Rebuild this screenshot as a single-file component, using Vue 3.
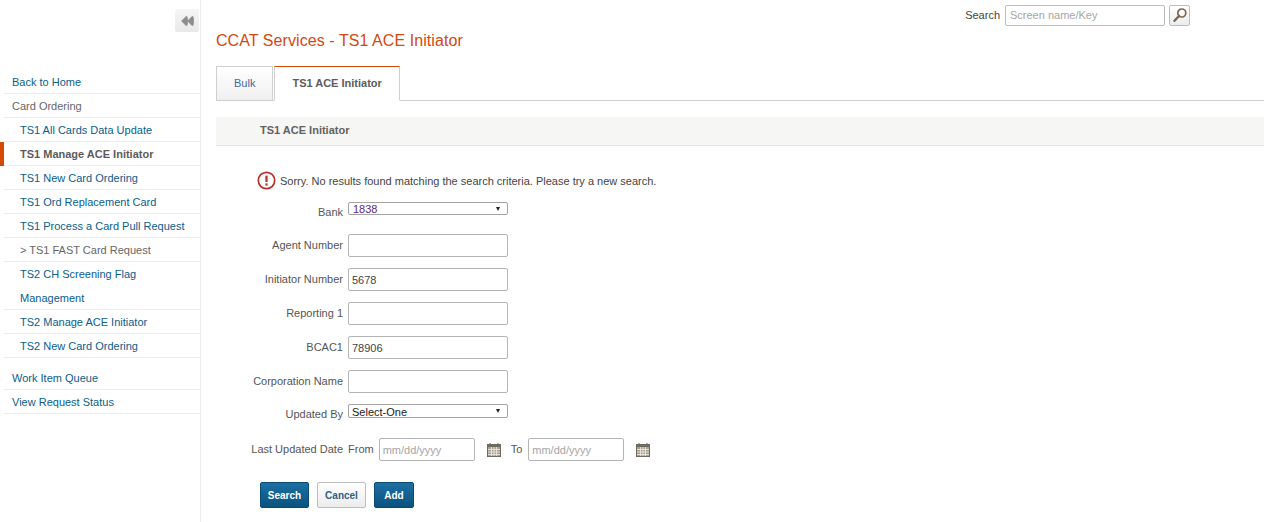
<template>
  <div class="page">
    <aside class="sidebar">
      <div class="collapse-row">
        <button class="collapse" type="button" aria-label="Collapse">
          <svg width="14" height="12" viewBox="0 0 14 12"><path d="M6.5 1 L1.5 6 L6.5 11 L7.5 9 L7.5 3 Z M12.5 1 L7.5 6 L12.5 11 L13.5 9 L13.5 3 Z" fill="#8c8c8c" stroke="#8c8c8c" stroke-width="0.6" stroke-linejoin="round" /></svg>
        </button>
      </div>
      <nav class="nav">
        <a
          v-for="item in navItems"
          :key="item.label"
          class="nav-item"
          :class="[item.kind, { active: item.active }]"
        >{{ item.label }}</a>
      </nav>
      <nav class="nav nav-second">
        <a class="nav-item" v-for="item in secondItems" :key="item">{{ item }}</a>
      </nav>
    </aside>

    <main class="main">
      <div class="top-search">
        <label>Search</label>
        <input type="text" placeholder="Screen name/Key">
        <button class="search-icon" type="button" aria-label="Search">
          <svg width="16" height="16" viewBox="0 0 16 16">
            <circle cx="9.8" cy="6" r="4" fill="#fbfaf8" stroke="#7a6650" stroke-width="1.7" />
            <path d="M7 9 L2.5 13.8" stroke="#7a6650" stroke-width="2.4" stroke-linecap="round" />
          </svg>
        </button>
      </div>

      <h1 class="title">CCAT Services - TS1 ACE Initiator</h1>

      <div class="tabs">
        <a class="tab">Bulk</a>
        <a class="tab tab-active">TS1 ACE Initiator</a>
      </div>

      <div class="section-bar">TS1 ACE Initiator</div>

      <div class="message">
        <svg width="19" height="19" viewBox="0 0 19 19">
          <circle cx="9.5" cy="9.5" r="8.2" fill="#fff" stroke="#b5302a" stroke-width="1.7" />
          <path d="M9.5 4.6 V11" stroke="#b5302a" stroke-width="2.2" />
          <rect x="8.4" y="12.4" width="2.2" height="2.2" fill="#b5302a" />
        </svg>
        <span>Sorry. No results found matching the search criteria. Please try a new search.</span>
      </div>

      <form class="form" @submit.prevent>
        <div class="row row-bank">
          <label>Bank</label>
          <div class="fake-select"><span class="purple">1838</span><i></i></div>
        </div>
        <div class="row row-input" v-for="f in fields" :key="f.label">
          <label>{{ f.label }}</label>
          <input type="text" :value="f.value">
        </div>
        <div class="row row-updated">
          <label>Updated By</label>
          <div class="fake-select tall"><span class="dark">Select-One</span><i></i></div>
        </div>
        <div class="row row-date">
          <label>Last Updated Date</label>
          <span class="date-word">From</span>
          <input class="date" type="text" placeholder="mm/dd/yyyy">
          <svg class="cal" width="14" height="14" viewBox="0 0 14 14"><use href="#cal" /></svg>
          <span class="date-word to">To</span>
          <input class="date" type="text" placeholder="mm/dd/yyyy">
          <svg class="cal" width="14" height="14" viewBox="0 0 14 14"><use href="#cal" /></svg>
        </div>
        <div class="buttons">
          <button class="btn primary" type="button">Search</button>
          <button class="btn plain" type="button">Cancel</button>
          <button class="btn primary" type="button">Add</button>
        </div>
      </form>

      <svg width="0" height="0" class="defs">
        <defs>
          <g id="cal">
            <rect x="0.5" y="1.5" width="13" height="12" fill="#a8a090" stroke="#6f6a60" />
            <rect x="0.5" y="1.5" width="13" height="2.5" fill="#6f6a60" />
            <path d="M3 0 V3 M11 0 V3" stroke="#6f6a60" />
            <path d="M4.5 4 V13 M7 4 V13 M9.5 4 V13 M1 6.5 H13 M1 9 H13 M1 11.5 H13" stroke="#f0eeea" stroke-width="0.8" />
          </g>
        </defs>
      </svg>
    </main>
  </div>
</template>

<script setup>
const navItems = [
  { label: 'Back to Home', kind: 'top' },
  { label: 'Card Ordering', kind: 'top grey' },
  { label: 'TS1 All Cards Data Update', kind: 'sub' },
  { label: 'TS1 Manage ACE Initiator', kind: 'sub', active: true },
  { label: 'TS1 New Card Ordering', kind: 'sub' },
  { label: 'TS1 Ord Replacement Card', kind: 'sub' },
  { label: 'TS1 Process a Card Pull Request', kind: 'sub' },
  { label: '> TS1 FAST Card Request', kind: 'sub grey' },
  { label: 'TS2 CH Screening Flag Management', kind: 'sub wrap' },
  { label: 'TS2 Manage ACE Initiator', kind: 'sub' },
  { label: 'TS2 New Card Ordering', kind: 'sub' }
]

const secondItems = ['Work Item Queue', 'View Request Status']

const fields = [
  { label: 'Agent Number', value: '' },
  { label: 'Initiator Number', value: '5678' },
  { label: 'Reporting 1', value: '' },
  { label: 'BCAC1', value: '78906' },
  { label: 'Corporation Name', value: '' }
]
</script>

<style>
html, body {
  background: #fff;
  overflow: hidden;
}
</style>

<style scoped>
.page {
  display: flex;
  height: 522px;
  font-family: "Liberation Sans", Arial, sans-serif;
  font-size: 11px;
  color: #555;
}

.sidebar {
  width: 200px;
  flex: none;
  box-sizing: content-box;
  border-right: 1px solid #ededed;
}

.collapse-row {
  height: 70px;
  display: flex;
  justify-content: flex-end;
  align-items: flex-start;
  padding-top: 9px;
  box-sizing: border-box;
}

.collapse {
  width: 24px;
  height: 23px;
  margin-right: 1px;
  padding: 0;
  border: none;
  border-radius: 2px;
  background: linear-gradient(#f5f5f5, #e9e9e9);
  display: flex;
  align-items: center;
  justify-content: center;
}

.nav {
  display: flex;
  flex-direction: column;
  padding-left: 4px;
}

.nav-second {
  margin-top: 8px;
}

.nav-item {
  display: block;
  height: 24px;
  line-height: 24px;
  padding-left: 8px;
  padding-right: 8px;
  box-sizing: border-box;
  border-bottom: 1px solid #ececec;
  color: #0a5d8c;
}

.nav-item.grey {
  color: #666;
}

.nav-item.sub {
  padding-left: 16px;
}

.nav-item.wrap {
  height: 48px;
  padding-right: 40px;
}

.nav-item.active {
  color: #5c5c5c;
  font-weight: bold;
  position: relative;
}

.nav-item.active::before {
  content: "";
  position: absolute;
  left: -4px;
  top: 0;
  bottom: -1px;
  width: 4px;
  background: #d64a05;
}

.main {
  flex: 1;
  min-width: 0;
  padding: 0 13px 0 15px;
}

.top-search {
  display: flex;
  justify-content: flex-end;
  align-items: center;
  height: 30px;
  padding-right: 74px;
  gap: 5px;
  color: #444;
}

.top-search input {
  width: 160px;
  height: 21px;
  box-sizing: border-box;
  border: 1px solid #bdbdbd;
  border-radius: 2px;
  padding: 0 4px;
  font: inherit;
}

.top-search input::placeholder,
.date::placeholder {
  color: #a5a5a5;
  opacity: 1;
}

.search-icon {
  width: 21px;
  height: 21px;
  margin-left: -1px;
  padding: 0;
  border: 1px solid #bdbdbd;
  border-radius: 2px;
  background: linear-gradient(#fff, #ececec);
  display: flex;
  align-items: center;
  justify-content: center;
}

.title {
  margin: 0;
  font-size: 16px;
  font-weight: normal;
  line-height: 22px;
  letter-spacing: 0.07px;
  color: #d6470f;
}

.tabs {
  display: flex;
  align-items: flex-start;
  gap: 1px;
  height: 34px;
  margin-top: 14px;
  border-bottom: 1px solid #cfcfcf;
}

.tab {
  box-sizing: border-box;
  height: 35px;
  line-height: 33px;
  padding: 0 17px;
  color: #3f6a9a;
  background: linear-gradient(#fff, #f0f0f0);
  border: 1px solid #cfcfcf;
}

.tab-active {
  color: #5c5c5c;
  font-weight: bold;
  background: #fff;
  border-top: 1px solid #d64a05;
  border-bottom-color: #fff;
}

.section-bar {
  margin-top: 16px;
  height: 29px;
  line-height: 27px;
  box-sizing: border-box;
  padding-left: 44px;
  background: #f6f6f4;
  border-bottom: 1px solid #e3e3e3;
  font-weight: bold;
  color: #626262;
}

.message {
  display: flex;
  align-items: center;
  gap: 4px;
  height: 19px;
  margin: 25px 0 0 41px;
  color: #444;
}

.form {
  display: flex;
  flex-direction: column;
}

.row {
  display: flex;
  align-items: center;
}

.row > label {
  width: 127px;
  margin-right: 5px;
  text-align: right;
  color: #555;
  flex: none;
}

.row-bank {
  margin-top: 12px;
  height: 25px;
  align-items: flex-start;
}

.row-bank label,
.row-updated label {
  line-height: 13px;
  padding-top: 4px;
}

.fake-select {
  width: 160px;
  height: 13px;
  box-sizing: border-box;
  border: 1px solid #a3a3a3;
  border-radius: 2px;
  display: flex;
  align-items: center;
  justify-content: space-between;
  padding: 0 7px 0 3px;
  background: #fff;
}

.fake-select.tall {
  height: 14px;
}

.fake-select i {
  width: 0;
  height: 0;
  border-left: 2.5px solid transparent;
  border-right: 2.5px solid transparent;
  border-top: 4px solid #222;
}

.purple {
  color: #5a2a78;
  margin-left: 1px;
}

.dark {
  color: #222;
  padding-top: 1px;
}

.row-input {
  height: 23px;
  margin-bottom: 11px;
}

.row-bank + .row-input {
  margin-top: 7px;
}

.row-input label {
  padding-bottom: 1px;
}

.row-input input {
  width: 160px;
  height: 23px;
  box-sizing: border-box;
  border: 1px solid #b5b5b5;
  border-radius: 2px;
  padding: 0 3px;
  font: inherit;
  color: #444;
}

.row-updated {
  height: 14px;
  align-items: flex-start;
}

.row-date {
  margin-top: 20px;
  height: 23px;
}

.row-date > label,
.date-word {
  padding-bottom: 2px;
}

.date-word {
  color: #555;
  margin-right: 5px;
}

.date-word.to {
  margin-right: 6px;
}

.date {
  width: 96px;
  height: 23px;
  box-sizing: border-box;
  border: 1px solid #b5b5b5;
  border-radius: 2px;
  padding: 0 3px;
  font: inherit;
}

.cal {
  margin: 0 10px 0 12px;
  flex: none;
}

.buttons {
  display: flex;
  gap: 8px;
  margin: 21px 0 0 44px;
}

.btn {
  height: 26px;
  padding: 0;
  border-radius: 2px;
  font-family: inherit;
  font-size: 10px;
  font-weight: bold;
}

.primary {
  color: #fff;
  border: 1px solid #0a4a78;
  background: linear-gradient(#1c6fa3, #0b527f);
}

.primary:first-child {
  width: 49px;
}

.primary:last-child {
  width: 40px;
}

.plain {
  width: 49px;
  color: #2f5f86;
  border: 1px solid #bdbdbd;
  background: linear-gradient(#fff, #ececec);
}

.defs {
  position: absolute;
}
</style>
